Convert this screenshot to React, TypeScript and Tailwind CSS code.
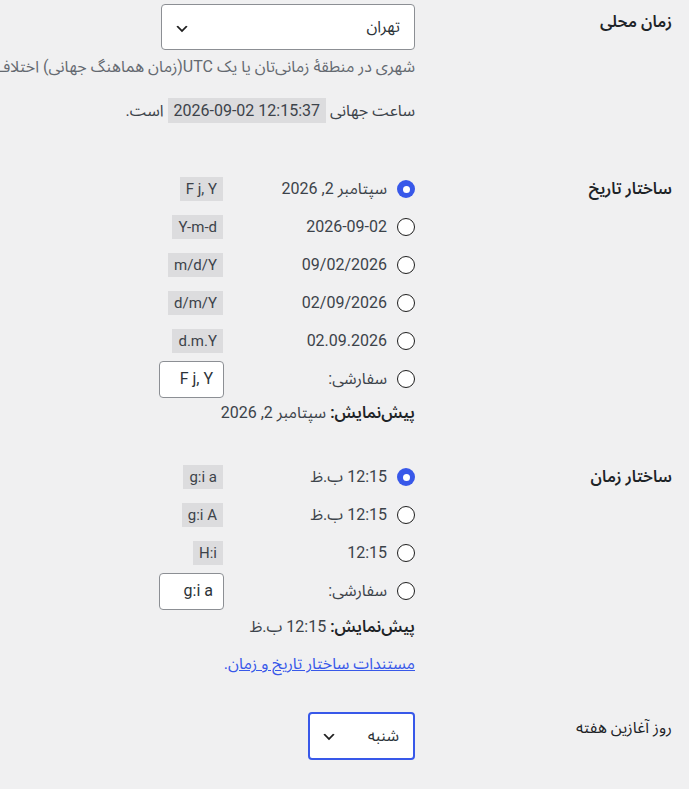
import React from "react";

const Chevron = () => (
  <svg width="16" height="16" viewBox="0 0 20 20" className="shrink-0">
    <path d="M5 6l5 5 5-5 2 1-7 7-7-7 2-1z" fill="#1e1e1e" />
  </svg>
);

const Radio = ({ checked }: { checked?: boolean }) =>
  checked ? (
    <span className="flex h-[18px] w-[18px] shrink-0 items-center justify-center rounded-full bg-[#3858e9]">
      <span className="h-[7px] w-[7px] rounded-full bg-white" />
    </span>
  ) : (
    <span className="h-[18px] w-[18px] shrink-0 rounded-full border border-[#1e1e1e] bg-white" />
  );

const Code = ({ children, big }: { children: React.ReactNode; big?: boolean }) => (
  <code
    dir="ltr"
    className={`mr-[4px] inline-block bg-[#dcdcde] font-[family-name:Roboto,'Noto_Sans_Arabic','DejaVu_Sans',sans-serif] text-[#3c434a] ${
      big ? "h-[25px] px-[6px] text-[16px] leading-[25px]" : "h-[24px] px-[6px] text-[15px] leading-[24px]"
    }`}
  >
    {children}
  </code>
);

const Option = ({ checked, text, fmt }: { checked?: boolean; text: string; fmt: string }) => (
  <div className="flex h-[38px] items-center whitespace-nowrap">
    <Radio checked={checked} />
    <span className="mr-[10px] w-[160px]">{text}</span>
    <Code>{fmt}</Code>
  </div>
);

const Custom = ({ value }: { value: string }) => (
  <div className="flex h-[38px] items-center whitespace-nowrap">
    <Radio />
    <span className="mr-[10px] w-[160px]">سفارشی:</span>
    <div
      dir="rtl"
      className="mr-[3px] flex h-[37px] w-[65px] items-center justify-start rounded-[4px] border border-[#8c8f94] bg-white px-[10px] text-[#2c3338]"
    >
      <span dir="ltr">{value}</span>
    </div>
  </div>
);

const Label = ({ children, pt }: { children: React.ReactNode; pt: string }) => (
  <div className={`w-[274px] shrink-0 pr-[17px] font-semibold text-[#1d2327] ${pt}`}>{children}</div>
);

export default function App() {
  return (
    <div
      dir="rtl"
      className="h-[789px] w-[689px] overflow-hidden bg-[#f0f0f1] font-[family-name:Roboto,'Noto_Sans_Arabic','DejaVu_Sans',sans-serif] text-[16px] leading-[24px] text-[#3c434a]"
    >
      {/* Timezone */}
      <div className="flex">
        <Label pt="pt-[10px]">زمان محلی</Label>
        <div className="flex min-w-0 flex-1 flex-col">
          <div className="mt-[4px] flex h-[46px] w-[254px] items-center justify-between rounded-[4px] border border-[#8c8f94] bg-white pl-[12px] pr-[14px] text-[#2c3338]">
            <span>تهران</span>
            <span className="pt-[3px]">
              <Chevron />
            </span>
          </div>
          <p className="mt-[5px] whitespace-nowrap text-[#646970]">
            شهری در منطقهٔ زمانی‌تان یا یک UTC(زمان هماهنگ جهانی) اختلاف زمانی را انتخاب کنید.
          </p>
          <p className="mt-[19px] flex items-center whitespace-nowrap">
            <span>ساعت جهانی</span>
            <Code big>2026-09-02 12:15:37</Code>
            <span className="mr-[4px]">است.</span>
          </p>
        </div>
      </div>

      {/* Date format */}
      <div className="mt-[47px] flex">
        <Label pt="pt-[7px]">ساختار تاریخ</Label>
        <div className="flex min-w-0 flex-1 flex-col">
          <Option checked text="سپتامبر 2, 2026" fmt="F j, Y" />
          <Option text="2026-09-02" fmt="Y-m-d" />
          <Option text="09/02/2026" fmt="m/d/Y" />
          <Option text="02/09/2026" fmt="d/m/Y" />
          <Option text="02.09.2026" fmt="d.m.Y" />
          <Custom value="F j, Y" />
          <p className="mt-[3px] whitespace-nowrap">
            <strong className="font-semibold text-[#1d2327]">پیش‌نمایش:</strong> سپتامبر 2, 2026
          </p>
        </div>
      </div>

      {/* Time format */}
      <div className="mt-[33px] flex">
        <Label pt="pt-[7px]">ساختار زمان</Label>
        <div className="flex min-w-0 flex-1 flex-col">
          <Option checked text="12:15 ب.ظ" fmt="g:i a" />
          <Option text="12:15 ب.ظ" fmt="g:i A" />
          <Option text="12:15" fmt="H:i" />
          <Custom value="g:i a" />
          <p className="mt-[5px] whitespace-nowrap">
            <strong className="font-semibold text-[#1d2327]">پیش‌نمایش:</strong> 12:15 ب.ظ
          </p>
          <p className="mt-[13px] whitespace-nowrap">
            <a href="#" className="text-[#3858e9] underline">
              مستندات ساختار تاریخ و زمان
            </a>
            <span className="text-[#3858e9]">.</span>
          </p>
        </div>
      </div>

      {/* Start of week */}
      <div className="mt-[36px] flex">
        <div className="w-[274px] shrink-0 pr-[17px] pt-[4px] text-[#1d2327]">روز آغازین هفته</div>
        <div className="flex min-w-0 flex-1 flex-col">
          <div className="flex h-[48px] w-[107px] items-center justify-between rounded-[4px] border-2 border-[#3858e9] bg-white pl-[11px] pr-[14px] text-[#2c3338]">
            <span>شنبه</span>
            <span className="pt-[2px]">
              <Chevron />
            </span>
          </div>
        </div>
      </div>
    </div>
  );
}
